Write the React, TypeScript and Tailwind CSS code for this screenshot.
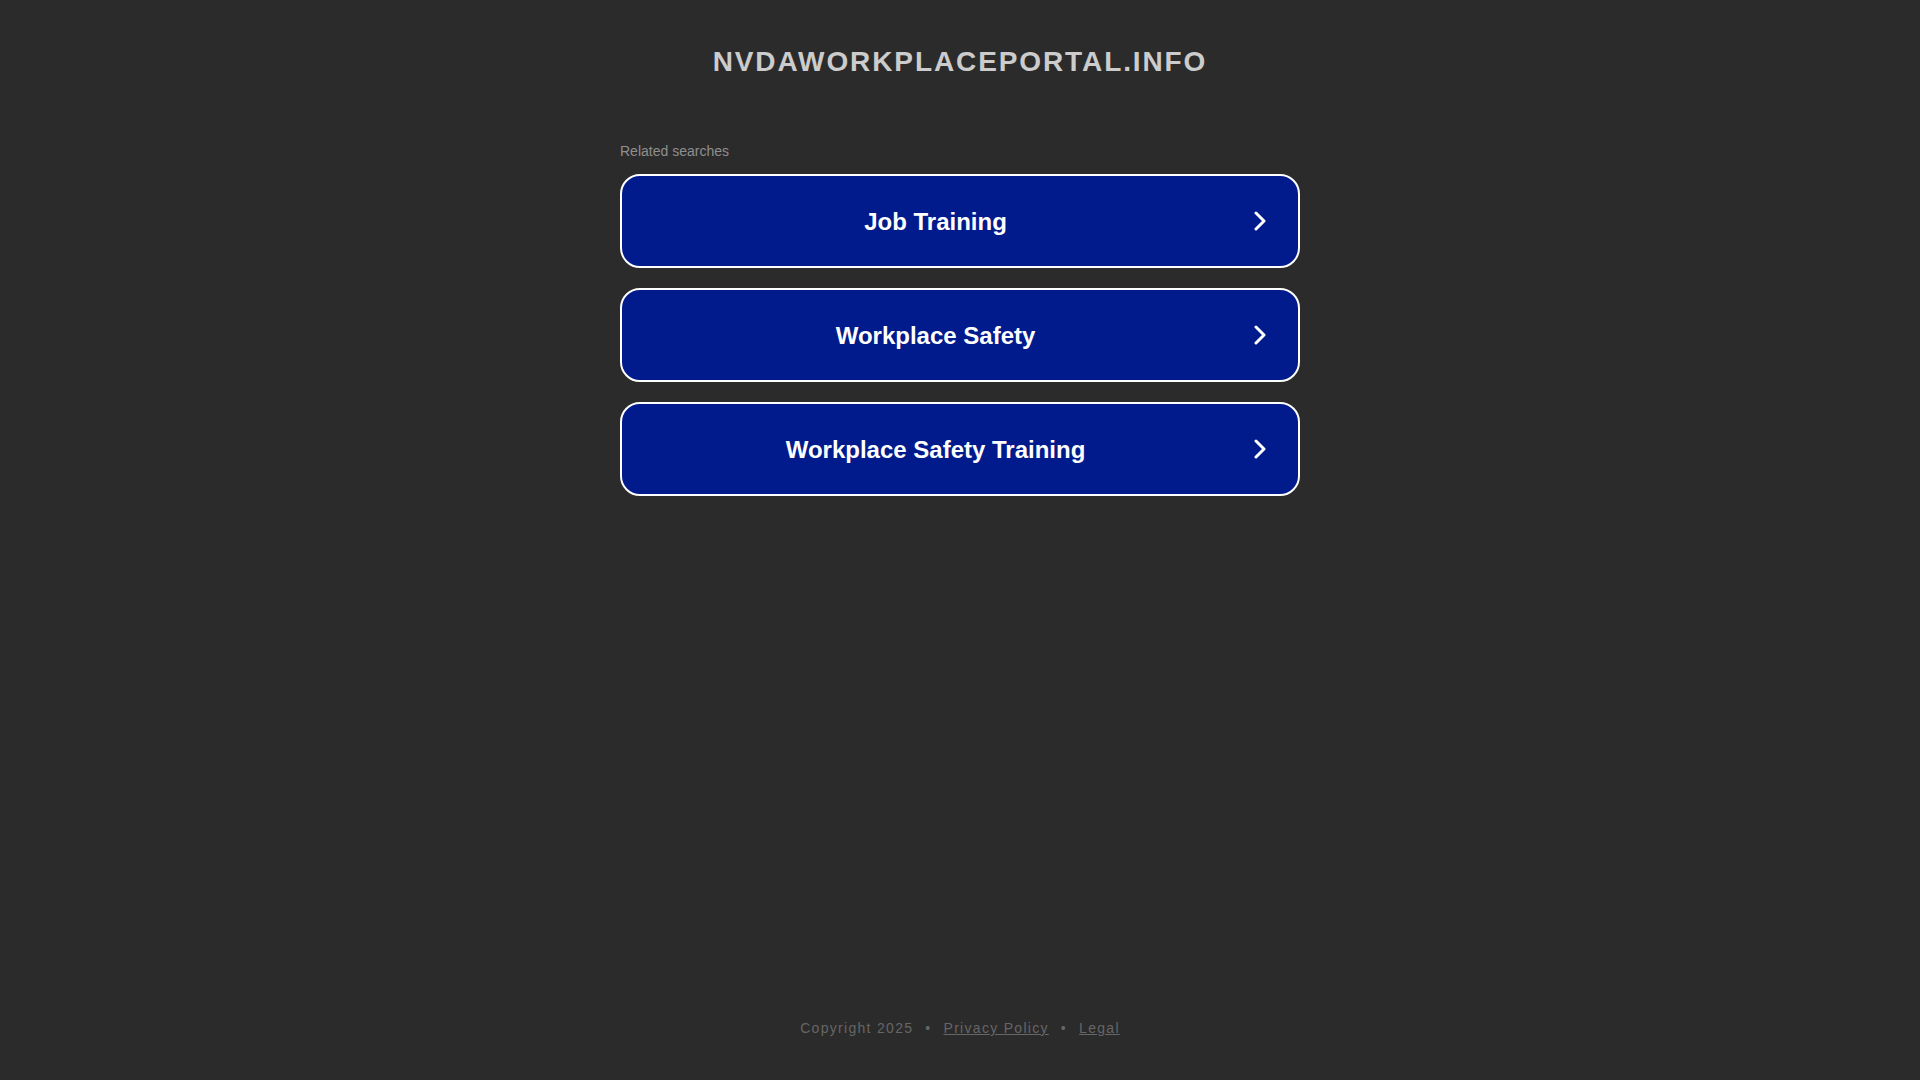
const searches = ["Job Training", "Workplace Safety", "Workplace Safety Training"];

function Chevron() {
  return (
    <svg viewBox="0 0 14 20" className="h-[20px] w-[14px]" fill="none" stroke="currentColor" strokeWidth="3">
      <path strokeLinecap="round" strokeLinejoin="round" d="M3 2l8 8-8 8" />
    </svg>
  );
}

export default function App() {
  return (
    <div className="flex min-h-screen flex-col bg-[#2b2b2b] font-['Arial','Liberation_Sans',sans-serif]">
      <h1 className="pt-[45px] text-center text-[28px] font-bold leading-[34px] tracking-[1.9px] text-[#cccccc]">
        NVDAWORKPLACEPORTAL.INFO
      </h1>

      <main className="mx-auto mt-[64px] w-[680px]">
        <p className="text-[14px] leading-[16px] text-[#8f8f8f]">Related searches</p>
        <div className="mt-[15px] flex flex-col gap-[20px]">
          {searches.map((s) => (
            <a
              key={s}
              href="#"
              className="flex h-[94px] items-center rounded-[20px] border-2 border-white bg-[#011a8c] pr-[31px] text-white"
            >
              <span className="flex-1 pt-[2px] pr-[4px] text-center text-[24px] font-bold">{s}</span>
              <Chevron />
            </a>
          ))}
        </div>
      </main>

      <footer className="mt-auto pb-[42px] text-center text-[14px] leading-[20px] tracking-[1.3px] text-[#666666]">
        Copyright 2025
        <span className="mx-[12px]">•</span>
        <a href="#" className="underline">Privacy Policy</a>
        <span className="mx-[12px]">•</span>
        <a href="#" className="underline">Legal</a>
      </footer>
    </div>
  );
}
